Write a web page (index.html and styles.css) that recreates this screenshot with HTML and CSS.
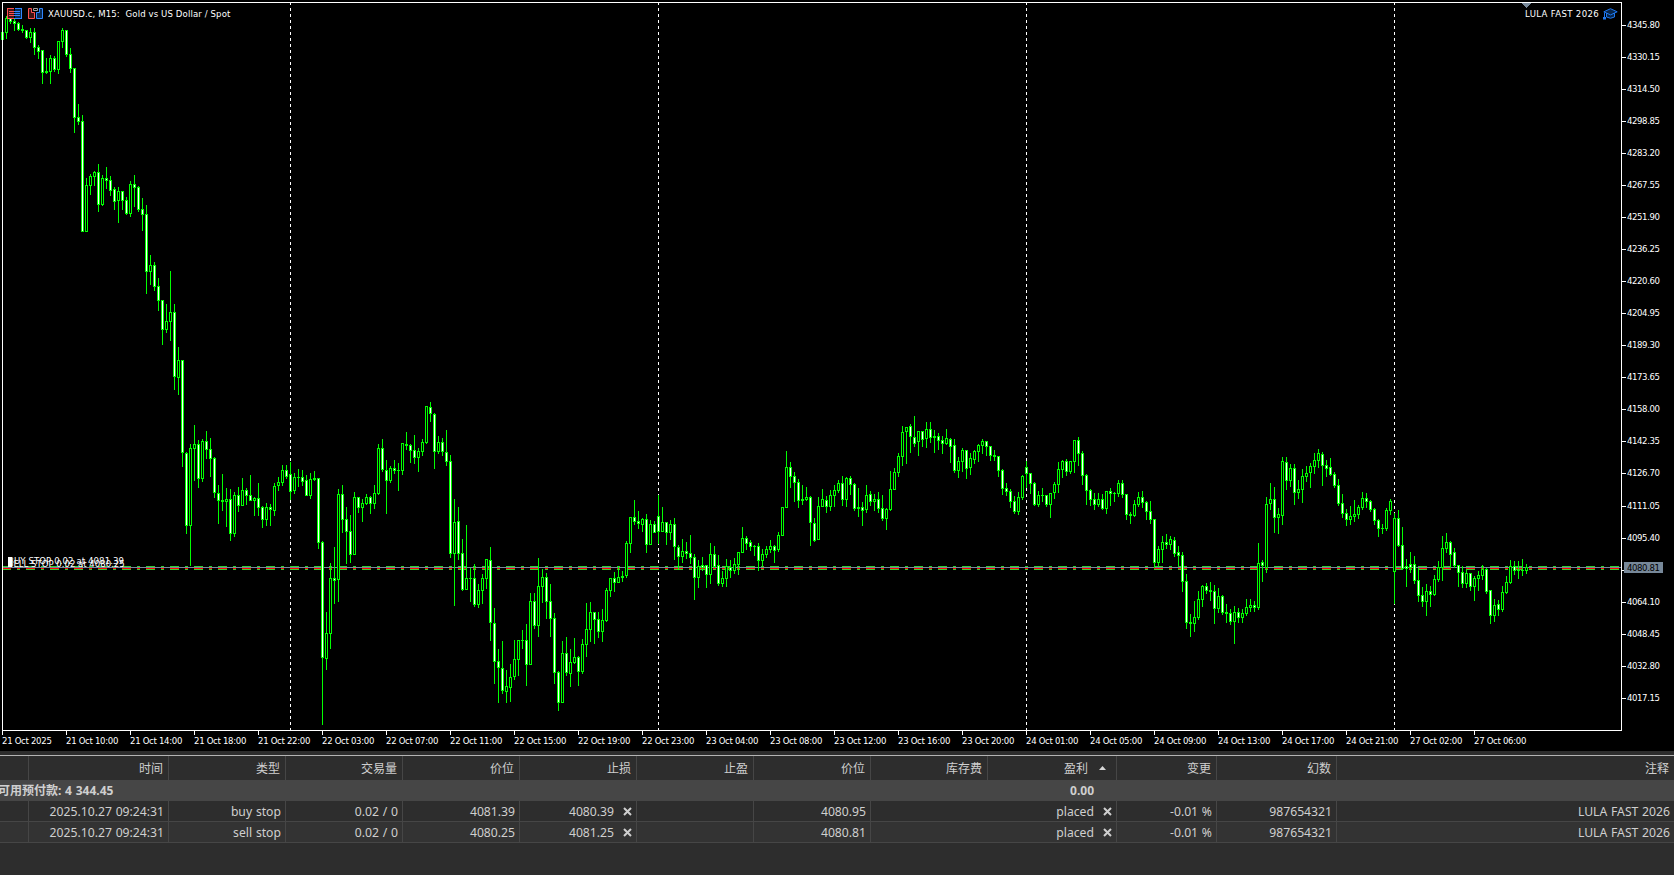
FILE: index.html
```html
<!DOCTYPE html>
<html lang="zh-CN">
<head>
    <meta charset="UTF-8">
    <meta name="viewport" content="width=device-width, initial-scale=1.0">
    <title>XAUUSD.c, M15</title>
    <link rel="stylesheet" href="styles.css">
</head>
<body>
    <section class="chart">
        <div class="plot">
            <svg id="candles" width="1622" height="731" viewBox="0 0 1622 731" shape-rendering="crispEdges">
                <!-- Day separators -->
                <g stroke="#fff" stroke-dasharray="3 3">
                    <path d="M290.5 2V730M658.5 2V730M1026.5 2V730M1394.5 2V730" />
                </g>
                <!-- Pending order lines -->
                <g stroke-dasharray="9 6 3 6">
                    <path d="M2 566.5H1621M2 569.5H1621" stroke="#32cd32" />
                    <path d="M2 568.5H1621" stroke="#ff0000" />
                </g>
                <path d="M2 567.5H1621" stroke="#778899" />
                <g id="bars"></g>
                <path d="M1522 3h9l-4.5 5z" fill="#778899" />
                <rect x="2.5" y="2.5" width="1619" height="728" fill="none" stroke="#fff" />
            </svg>
            <div class="chart-title">
                <svg width="15" height="11" viewBox="0 0 15 11" shape-rendering="crispEdges">
                    <path d="M1 1h6v9H1z" fill="#401414" />
                    <path d="M8 1h6v9H8z" fill="#0b2b52" />
                    <path d="M7 .5H.5v10H7M2 3.5h5M2 5.5h5M2 7.5h5" fill="none" stroke="#ff5050" />
                    <path d="M8 .5h6.5v10H7M7 3.5h6M7 5.5h6M7 7.5h6" fill="none" stroke="#2f86ff" />
                </svg>
                <svg width="15" height="11" viewBox="0 0 15 11">
                    <path d="M.5.5h3v4h3v6h-6z" fill="#401414" stroke="#ff5050" />
                    <path d="M14.500.5h-3v4h-3v6h6z" fill="#0b2b52" stroke="#2f86ff" />
                    <path d="M5.500.5h4v2h-4z" fill="none" stroke="#a0a0a0" />
                </svg>
                <span>XAUUSD.c, M15:&nbsp; Gold vs US Dollar / Spot</span>
            </div>
            <div class="expert">
                <span>LULA FAST 2026</span>
                <svg width="15" height="12" viewBox="0 0 15 12">
                    <path d="M3.500 5v4q4 2.500 8 0V5" fill="#08264a" stroke="#1e78f0" />
                    <path d="M.8 3.800 7.500.7l6.700 3.100-6.700 3.100z" fill="#08264a" stroke="#1e78f0" />
                    <path d="M1.500 4.500V9" stroke="#1e78f0" />
                    <path d="M0 9h3v2.500H0z" fill="#1e78f0" />
                </svg>
            </div>
            <div class="order buy">BUY STOP 0.02 at 4081.39</div>
            <div class="order sell">SELL STOP 0.02 at 4080.25</div>
        </div>
        <div class="price-axis">
            <ol id="prices"></ol>
            <div class="price-now">4080.81</div>
        </div>
        <ol class="time-axis" id="times"></ol>
    </section>

    <section class="toolbox">
        <table>
            <colgroup>
                <col class="c-mark"><col class="c-time"><col class="c-std"><col class="c-std"><col class="c-std">
                <col class="c-std"><col class="c-std"><col class="c-std"><col class="c-std">
                <col class="c-profit"><col class="c-change"><col class="c-magic"><col>
            </colgroup>
            <thead>
                <tr>
                    <th></th><th>时间</th><th>类型</th><th>交易量</th><th>价位</th><th>止损</th><th>止盈</th><th>价位</th><th>库存费</th>
                    <th class="sorted">盈利<svg width="7" height="4" viewBox="0 0 7 4"><path d="M0 4 3.500 0 7 4z" fill="#d8d8d8" /></svg></th>
                    <th>变更</th><th>幻数</th><th>注释</th>
                </tr>
            </thead>
            <tbody>
                <tr class="summary">
                    <td colspan="9" class="margin">可用预付款: 4 344.45</td>
                    <td class="total">0.00</td>
                    <td colspan="3"></td>
                </tr>
                <tr>
                    <td></td><td>2025.10.27 09:24:31</td><td>buy stop</td><td>0.02 / 0</td><td>4081.39</td>
                    <td class="closable">4080.39<svg class="x" viewBox="0 0 9 9"><path d="M1 1l7 7M8 1 1 8" /></svg></td>
                    <td></td><td>4080.95</td>
                    <td colspan="2" class="closable">placed<svg class="x" viewBox="0 0 9 9"><path d="M1 1l7 7M8 1 1 8" /></svg></td>
                    <td>-0.01 %</td><td>987654321</td><td>LULA FAST 2026</td>
                </tr>
                <tr class="alt">
                    <td></td><td>2025.10.27 09:24:31</td><td>sell stop</td><td>0.02 / 0</td><td>4080.25</td>
                    <td class="closable">4081.25<svg class="x" viewBox="0 0 9 9"><path d="M1 1l7 7M8 1 1 8" /></svg></td>
                    <td></td><td>4080.81</td>
                    <td colspan="2" class="closable">placed<svg class="x" viewBox="0 0 9 9"><path d="M1 1l7 7M8 1 1 8" /></svg></td>
                    <td>-0.01 %</td><td>987654321</td><td>LULA FAST 2026</td>
                </tr>
            </tbody>
        </table>
    </section>

    <script src="chart.js"></script>
</body>
</html>
```
FILE: styles.css
```css
* {
    box-sizing: border-box;
}
body {
    margin: 0;
    width: 1674px;
    height: 875px;
    overflow: hidden;
    display: flex;
    flex-direction: column;
    background-color: #2d2d2d;
}
ol {
    list-style: none;
    margin: 0;
    padding: 0;
}
svg {
    display: block;
    flex: none;
}

/* chart */
.chart {
    display: grid;
    grid-template-columns: 1622px 52px;
    grid-template-rows: 731px 20px;
    background-color: #000;
    color: #fff;
    font-family: "DejaVu Sans Condensed", "DejaVu Sans", sans-serif;
    font-stretch: condensed;
    font-size: 9.5px;
    line-height: 12px;
    white-space: nowrap;
}
.plot {
    position: relative;
}
.chart-title {
    position: absolute;
    top: 8px;
    left: 7px;
    display: flex;
    gap: 6px;
}
.chart-title span {
    margin-left: -1px;
    letter-spacing: 0.12px;
}
.expert {
    position: absolute;
    top: 8px;
    right: 4px;
    display: flex;
    gap: 4px;
    letter-spacing: 0.35px;
}
.order {
    position: absolute;
    left: 8px;
    letter-spacing: 0.1px;
}
.buy {
    top: 555px;
}
.sell {
    top: 558px;
    letter-spacing: 0;
}
.sell::before {
    content: "";
    position: absolute;
    top: -1px;
    left: 0;
    width: 4px;
    height: 10px;
    background-color: #fff;
}
.price-axis {
    position: relative;
    padding-top: 9px;
}
.price-axis li {
    display: flex;
    align-items: center;
    height: 32px;
    letter-spacing: -0.4px;
}
.price-axis li::before {
    content: "";
    width: 4px;
    height: 1px;
    margin-right: 1px;
    background-color: #fff;
}
.price-axis li.wide {
    height: 33px;
    padding-top: 1px;
}
.price-now {
    position: absolute;
    top: 562px;
    left: 2px;
    width: 39px;
    height: 11px;
    padding-left: 3px;
    line-height: 11px;
    letter-spacing: -0.4px;
    background-color: #778899;
    color: #000;
}
.time-axis {
    grid-column: 1 / 3;
    display: flex;
    padding-left: 2px;
}
.time-axis li {
    width: 64px;
    letter-spacing: -0.3px;
}
.time-axis li::before {
    content: "";
    display: block;
    width: 1px;
    height: 4px;
    background-color: #fff;
}

/* trade table */
.toolbox {
    margin-top: 4px;
    border-top: 1px solid #b4b4b4;
    color: #cfcfcf;
    font-family: "Noto Sans", "Noto Sans CJK SC", sans-serif;
    font-size: 12px;
}
table {
    width: 1674px;
    table-layout: fixed;
    border-collapse: separate;
    border-spacing: 0;
}
.c-mark { width: 29px; }
.c-time { width: 140px; }
.c-std { width: 117px; }
.c-profit { width: 129px; }
.c-change { width: 100px; }
.c-magic { width: 120px; }
th, td {
    padding: 2px 4px 0 0;
    border-right: 1px solid #464646;
    text-align: right;
    white-space: nowrap;
    line-height: 18px;
}
th:last-child, td:last-child {
    border-right: none;
}
th {
    height: 24px;
    padding-right: 5px;
    font-weight: normal;
}
td {
    height: 21px;
    border-bottom: 1px solid #464646;
    font-size: 12.2px;
    word-spacing: 0.6px;
}
.sorted svg {
    display: inline-block;
    margin: 0 5px 3px 11px;
}
.summary td {
    padding-top: 0;
    border: none;
    background-color: #464646;
    font-size: 12px;
    font-weight: bold;
}
.summary .margin {
    padding: 0;
    text-align: left;
    text-indent: -2px;
}
.summary .total {
    padding-right: 23px;
}
.alt td {
    background-color: #333;
}
.closable .x {
    display: inline-block;
    width: 9px;
    height: 9px;
    margin-left: 9px;
    stroke: #cfcfcf;
    stroke-width: 2;
}
```
FILE: chart.js
```js
// one bar per entry, 4px apart: high, body top, body bottom, low, f = filled / h = hollow
const BARS = `
32 32 39 39 h|16 18 32 38 h|17 18 21 23 f|19 21 23 30 f|22 23 29 30 f|25 29 30 32 f|30 30 37 38 f|28 32 37 42 h
28 32 47 54 f|45 47 51 58 f|50 50 72 83 f|58 71 72 73 f|55 58 71 83 h|56 58 69 71 f|41 41 69 73 h|28 30 41 47 h
30 30 54 56 f|48 54 68 72 f|68 68 117 132 f|104 117 121 124 f|115 121 231 231 f|178 185 231 231 h|174 176 185 194 h|171 172 176 185 h
164 172 204 211 f|175 178 204 205 h|167 178 180 188 f|176 180 190 195 f|187 189 201 209 f|187 191 200 222 h|191 191 200 209 f|197 200 213 214 f
181 184 213 216 h|175 184 187 206 f|186 187 209 211 f|198 209 214 230 f|205 214 271 293 f|255 265 271 284 h|262 265 286 290 f|278 286 300 310 f
300 300 329 344 f|304 321 329 332 h|271 312 321 340 h|304 312 376 389 f|347 360 377 394 h|360 360 452 466 f|452 453 525 533 f|444 448 525 565 h
425 444 448 480 h|440 444 478 487 f|439 441 478 481 h|431 441 449 458 f|438 449 458 476 f|457 458 492 497 f|485 493 500 523 f|474 500 501 510 f
488 499 501 526 h|489 499 533 540 f|492 495 533 536 h|487 495 505 511 f|478 490 505 505 h|488 490 495 504 f|475 495 500 500 f|497 498 500 515 h
483 498 507 515 f|506 507 519 527 f|503 507 519 525 h|504 507 509 525 f|483 486 510 515 h|477 482 485 490 h|465 470 482 485 h|465 470 476 478 f
462 474 491 499 f|473 477 490 493 h|469 477 477 486 f|470 477 481 485 f|475 480 495 495 f|473 479 495 498 h|471 478 479 480 f|478 478 542 548 f
541 542 657 724 f|612 633 658 669 h|563 578 633 648 h|547 578 580 603 f|489 494 579 601 h|485 494 519 532 f|507 519 531 563 f|515 531 554 562 f
492 497 554 554 h|497 497 507 512 f|499 503 507 521 h|494 497 503 504 h|496 497 503 513 f|485 493 503 508 h|444 448 493 494 h|439 448 469 471 f
460 470 480 513 f|466 468 480 482 h|460 468 470 473 f|463 470 470 490 f|443 443 470 474 h|432 444 445 449 f|444 445 450 462 f|435 450 457 463 f
448 451 457 471 h|439 442 451 455 h|406 406 442 443 h|402 407 413 421 f|413 414 451 468 f|436 442 451 453 h|438 442 451 455 f|430 452 461 465 f
455 461 553 557 f|499 522 553 605 h|507 521 553 559 f|539 553 589 590 f|525 578 589 589 h|568 578 578 601 f|564 578 604 606 f|584 590 604 607 h
574 578 590 603 h|559 559 578 588 h|547 560 622 640 f|608 623 661 683 f|649 661 667 702 f|641 668 690 693 f|670 686 691 702 h|664 677 687 701 h
640 659 676 679 h|640 640 659 675 h|630 640 640 648 f|624 640 664 685 f|593 601 664 664 h|593 601 625 628 f|558 586 625 636 h|569 577 586 602 h
573 577 601 618 f|584 601 618 636 f|613 618 672 683 f|671 672 702 710 f|641 653 702 702 h|637 653 672 675 f|649 662 673 686 h|638 657 662 663 h
656 657 671 685 f|639 644 671 673 h|603 629 644 656 h|602 612 629 641 h|612 612 619 643 f|612 619 631 637 f|609 620 631 641 h|588 590 620 621 h
578 578 590 596 h|572 578 582 591 f|566 577 582 582 h|571 576 577 581 f|541 543 575 577 h|517 517 543 552 h|500 517 521 524 f|511 521 523 528 f
518 519 524 531 h|514 519 544 552 f|520 524 544 544 h|521 524 532 532 f|495 516 531 543 f|507 522 531 531 h|522 522 532 544 f|520 524 532 539 h
518 524 546 559 f|545 547 556 569 f|539 551 556 562 h|542 551 553 558 f|535 553 557 563 f|554 557 577 599 f|560 566 577 587 h|557 565 567 570 f
565 565 574 587 f|543 554 574 583 h|546 554 566 567 f|555 565 583 585 f|571 578 583 586 h|559 566 578 586 h|560 567 570 577 f|558 564 570 573 h
552 552 564 574 h|527 538 552 552 h|536 538 543 549 f|540 542 546 550 f|545 546 546 555 f|543 546 560 570 f|549 554 560 565 h|546 549 554 557 h
540 546 549 552 h|545 546 550 562 f|532 535 549 551 h|507 507 535 535 h|451 467 507 507 h|462 467 476 487 f|472 476 482 501 f|479 482 500 507 f
485 499 500 504 f|487 497 499 500 h|496 497 522 545 f|518 523 540 541 f|497 506 539 539 h|489 499 506 506 h|496 500 506 512 f|490 495 506 510 h
485 490 495 506 h|480 483 490 492 h|476 483 499 505 f|477 478 499 506 h|476 478 484 494 f|483 484 508 510 f|488 507 508 516 f|502 507 510 525 f
485 495 509 512 h|491 494 501 505 f|494 499 501 510 h|492 499 508 512 f|495 508 518 520 f|508 509 518 529 h|471 489 509 510 h|468 472 489 489 h
453 456 472 476 h|426 432 456 465 h|427 427 431 463 h|424 426 436 452 f|416 437 443 446 f|431 431 441 455 h|431 431 439 446 f|422 429 438 447 h
422 429 437 442 f|430 436 437 452 f|433 436 440 449 f|436 440 443 453 f|429 438 443 444 h|438 439 446 462 f|439 445 470 472 f|457 461 470 477 h
448 450 461 471 h|450 450 468 478 f|453 458 467 474 h|450 451 459 463 h|444 445 451 461 h|439 441 445 453 h|441 441 446 455 f|446 446 455 460 f
450 455 456 460 f|456 456 470 476 f|469 470 488 494 f|483 488 491 495 f|489 491 501 507 f|496 501 511 513 f|492 497 511 514 h|475 476 497 499 h
461 467 473 487 f|473 473 483 493 f|482 483 504 505 f|491 495 504 506 h|488 495 495 501 f|495 495 504 506 f|493 493 504 517 h|482 484 492 498 h
462 469 484 492 h|460 461 469 477 h|459 461 471 475 f|461 461 471 473 h|440 440 461 472 h|437 440 453 465 f|451 453 475 484 f|474 475 490 504 f
489 490 499 505 f|493 499 504 509 f|493 499 504 506 h|494 499 508 509 f|491 491 508 513 h|488 491 493 505 f|492 493 493 501 f|480 483 493 496 h
480 483 494 497 f|494 494 514 519 f|512 514 515 523 f|500 504 515 516 h|492 497 504 506 h|491 497 502 507 f|501 502 511 519 f|501 511 519 523 f
519 519 562 567 f|546 549 562 566 h|536 542 549 562 h|534 542 544 548 f|536 539 544 549 h|537 540 553 556 f|546 552 555 565 f|552 555 581 591 f
574 581 622 628 f|614 622 623 636 f|601 617 623 631 h|591 599 617 619 h|585 586 599 606 h|583 586 590 593 f|582 590 591 600 f|585 591 608 623 f
588 596 608 612 h|595 596 612 614 f|604 612 613 622 f|609 613 621 624 f|606 612 621 643 h|608 612 617 622 f|609 613 617 622 h|599 607 613 615 h
599 605 607 611 h|601 605 607 611 f|543 563 607 609 h|560 562 565 581 f|497 504 567 572 h|483 499 503 509 h|487 499 517 532 f|508 514 517 533 h
457 461 515 524 h|457 462 480 489 f|464 468 480 486 h|464 468 492 504 f|480 489 492 498 h|469 476 489 502 h|466 473 476 481 h|463 466 472 487 h
453 460 466 473 h|449 453 460 467 h|452 454 465 485 f|460 465 468 476 f|458 467 474 475 f|472 474 485 487 f|479 485 503 505 f|494 503 513 517 f
509 513 519 525 f|506 516 519 524 h|500 514 516 521 h|505 507 514 518 h|492 498 507 509 h|493 498 501 507 f|500 501 509 511 f|508 509 520 524 f
519 520 528 536 f|524 528 528 533 f|508 510 528 530 h|499 501 510 514 h|513 518 571 603 h|510 518 545 546 f|527 545 568 568 f|559 566 568 586 f
552 564 567 572 f|556 564 580 583 f|568 580 595 601 f|587 595 601 606 f|584 591 601 615 h|586 591 594 606 f|575 579 594 595 h|561 567 579 581 h
536 548 567 580 h|533 542 548 552 h|541 542 554 567 f|548 552 565 567 f|565 565 572 586 f|566 572 583 587 f|569 573 583 587 h|573 573 586 590 f
576 578 586 600 h|571 575 578 590 h|565 569 575 579 h|568 569 591 593 f|590 590 615 623 f|599 605 615 621 h|600 604 609 615 f|586 592 609 611 h
576 582 592 593 h|560 566 582 583 h|561 566 570 574 f|561 570 570 578 f|559 570 570 575 f|564 567 570 573 h`;

const NS = "http://www.w3.org/2000/svg";
const bars = document.getElementById("bars");

function rect(x, y, w, h, fill) {
    const r = document.createElementNS(NS, "rect");
    r.setAttribute("x", x);
    r.setAttribute("y", y);
    r.setAttribute("width", w);
    r.setAttribute("height", h);
    r.setAttribute("fill", fill);
    bars.appendChild(r);
}

BARS.trim().split(/[|\n]/).forEach((bar, i) => {
    const [high, top, bottom, low, kind] = bar.split(" ");
    const x = 2 + i * 4;
    rect(x, +high, 1, low - high + 1, "#00ff00");
    rect(x - 1, +top, 3, bottom - top + 1, "#00ff00");
    if (bottom - top > 1) {
        rect(x, +top + 1, 1, bottom - top - 1, kind === "f" ? "#fff" : "#000");
    }
});

// price scale
const prices = document.getElementById("prices");
for (let i = 0; i < 22; i++) {
    const li = document.createElement("li");
    li.textContent = (4345.8 - i * 15.65).toFixed(2);
    if (i === 15) li.className = "wide";
    prices.appendChild(li);
}

// time scale
const TIMES = ["21 Oct 2025", "21 Oct 10:00", "21 Oct 14:00", "21 Oct 18:00", "21 Oct 22:00",
    "22 Oct 03:00", "22 Oct 07:00", "22 Oct 11:00", "22 Oct 15:00", "22 Oct 19:00", "22 Oct 23:00",
    "23 Oct 04:00", "23 Oct 08:00", "23 Oct 12:00", "23 Oct 16:00", "23 Oct 20:00",
    "24 Oct 01:00", "24 Oct 05:00", "24 Oct 09:00", "24 Oct 13:00", "24 Oct 17:00", "24 Oct 21:00",
    "27 Oct 02:00", "27 Oct 06:00"];
const times = document.getElementById("times");
TIMES.forEach(t => {
    const li = document.createElement("li");
    li.textContent = t;
    times.appendChild(li);
});
```
